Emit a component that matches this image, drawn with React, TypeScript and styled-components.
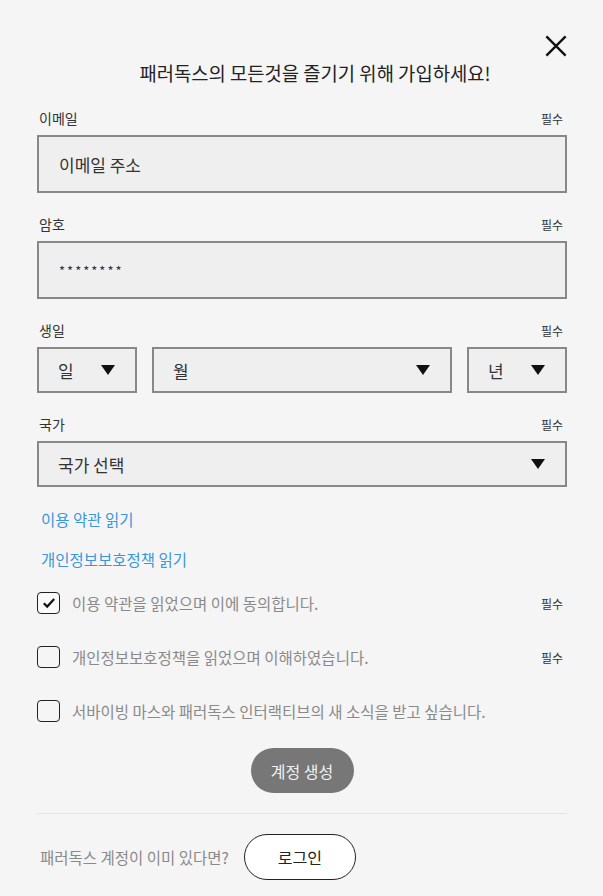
import { useState } from "react";
import styled, { createGlobalStyle } from "styled-components";

const FONT = `"Noto Sans CJK KR", "Noto Sans", sans-serif`;

const GlobalStyle = createGlobalStyle`
  * { box-sizing: border-box; }
  html, body {
    margin: 0;
    padding: 0;
    background: #f5f5f5;
    font-family: ${FONT};
  }
`;

export default function App() {
  const [terms, setTerms] = useState(true);
  const [privacy, setPrivacy] = useState(false);
  const [news, setNews] = useState(false);

  return (
    <Page>
      <GlobalStyle />
      <CloseRow>
        <CloseButton aria-label="닫기">
          <svg width="24" height="24" viewBox="0 0 24 24">
            <path d="M1.5 1.5 L22.5 22.5 M22.5 1.5 L1.5 22.5" stroke="#111" strokeWidth="2.6" fill="none" />
          </svg>
        </CloseButton>
      </CloseRow>
      <Title>패러독스의 모든것을 즐기기 위해 가입하세요!</Title>

      <Field>
        <LabelRow>
          <Label>이메일</Label>
          <Required>필수</Required>
        </LabelRow>
        <TextInput placeholder="이메일 주소" />
      </Field>

      <Field>
        <LabelRow>
          <Label>암호</Label>
          <Required>필수</Required>
        </LabelRow>
        <TextInput defaultValue="********" $mask />
      </Field>

      <Field>
        <LabelRow>
          <Label>생일</Label>
          <Required>필수</Required>
        </LabelRow>
        <DateRow>
          <Select>
            <span>일</span>
            <Arrow />
          </Select>
          <Select>
            <span>월</span>
            <Arrow />
          </Select>
          <Select>
            <span>년</span>
            <Arrow />
          </Select>
        </DateRow>
      </Field>

      <Field>
        <LabelRow>
          <Label>국가</Label>
          <Required>필수</Required>
        </LabelRow>
        <Select>
          <span>국가 선택</span>
          <Arrow />
        </Select>
      </Field>

      <Links>
        <LinkText href="#">이용 약관 읽기</LinkText>
        <LinkText href="#">개인정보보호정책 읽기</LinkText>
      </Links>

      <Checks>
        <CheckRow>
          <CheckBox $checked={terms} onClick={() => setTerms(!terms)}>
            {terms && (
              <svg width="14" height="12" viewBox="0 0 14 12">
                <path d="M1.8 6.2 L5.2 9.6 L12.2 2" stroke="#111" strokeWidth="2.2" fill="none" />
              </svg>
            )}
          </CheckBox>
          <CheckText>이용 약관을 읽었으며 이에 동의합니다.</CheckText>
          <Required>필수</Required>
        </CheckRow>
        <CheckRow>
          <CheckBox $checked={privacy} onClick={() => setPrivacy(!privacy)} />
          <CheckText>개인정보보호정책을 읽었으며 이해하였습니다.</CheckText>
          <Required>필수</Required>
        </CheckRow>
        <CheckRow>
          <CheckBox $checked={news} onClick={() => setNews(!news)} />
          <CheckText>서바이빙 마스와 패러독스 인터랙티브의 새 소식을 받고 싶습니다.</CheckText>
        </CheckRow>
      </Checks>

      <SubmitRow>
        <CreateButton>계정 생성</CreateButton>
      </SubmitRow>

      <Divider />

      <LoginRow>
        <LoginText>패러독스 계정이 이미 있다면?</LoginText>
        <LoginButton>로그인</LoginButton>
      </LoginRow>
    </Page>
  );
}

const Page = styled.div`
  width: 603px;
  padding: 35px 36px 16px 37px;
  display: flex;
  flex-direction: column;
`;

const CloseRow = styled.div`
  display: flex;
  justify-content: flex-end;
  height: 22px;
`;

const CloseButton = styled.button`
  width: 22px;
  height: 22px;
  padding: 0;
  margin: 0;
  border: none;
  background: none;
  cursor: pointer;
  display: flex;
  align-items: center;
  justify-content: center;

  svg {
    width: 22px;
    height: 22px;
  }
`;

const Title = styled.h1`
  margin: 3px 0 22px;
  padding-left: 26px;
  text-align: center;
  font-size: 18.8px;
  line-height: 26px;
  font-weight: 400;
  color: #222;
`;

const Field = styled.div`
  display: flex;
  flex-direction: column;
  & + & {
    margin-top: 21px;
  }
`;

const LabelRow = styled.div`
  display: flex;
  justify-content: space-between;
  align-items: center;
  height: 20px;
  margin-bottom: 7px;
  padding: 0 4px 0 2px;
`;

const Label = styled.span`
  font-size: 14px;
  color: #333;
`;

const Required = styled.span`
  font-size: 12px;
  color: #333;
`;

const TextInput = styled.input<{ $mask?: boolean }>`
  width: 100%;
  height: 58px;
  padding: 0 20px;
  border: 2px solid #888;
  background: #efefef;
  font-family: ${FONT};
  font-size: ${({ $mask }) => ($mask ? "13px" : "17px")};
  letter-spacing: ${({ $mask }) => ($mask ? "2px" : "0")};
  color: #333;
  outline: none;

  &::placeholder {
    color: #333;
    opacity: 1;
  }
`;

const DateRow = styled.div`
  display: grid;
  grid-template-columns: 100px 1fr 100px;
  gap: 15px;
`;

const Select = styled.div`
  display: flex;
  align-items: center;
  justify-content: space-between;
  height: 46px;
  padding: 0 20px 0 19px;
  border: 2px solid #888;
  background: #efefef;
  font-size: 17px;
  color: #333;
  cursor: pointer;
`;

const Arrow = styled.span`
  width: 0;
  height: 0;
  border-left: 7px solid transparent;
  border-right: 7px solid transparent;
  border-top: 10px solid #111;
`;

const Links = styled.div`
  display: flex;
  flex-direction: column;
  gap: 16px;
  margin-top: 20px;
  padding-left: 4px;
`;

const LinkText = styled.a`
  font-size: 15.5px;
  line-height: 24px;
  color: #3a97dc;
  text-decoration: none;
`;

const Checks = styled.div`
  display: flex;
  flex-direction: column;
  gap: 32px;
  margin-top: 21px;
  padding-right: 4px;
`;

const CheckRow = styled.label`
  display: flex;
  align-items: center;
  height: 22px;
  gap: 12px;
`;

const CheckBox = styled.span<{ $checked: boolean }>`
  flex: none;
  width: 23px;
  height: 22px;
  border: 1.5px solid #222;
  border-radius: 4px;
  display: flex;
  align-items: center;
  justify-content: center;
  background: ${({ $checked }) => ($checked ? "#fafafa" : "transparent")};
  cursor: pointer;
`;

const CheckText = styled.span`
  flex: 1;
  font-size: 15.5px;
  color: #8a8a8a;
`;

const SubmitRow = styled.div`
  display: flex;
  justify-content: center;
  margin-top: 26px;
`;

const CreateButton = styled.button`
  width: 103px;
  height: 45px;
  border: none;
  border-radius: 23px;
  background: #777;
  color: #f2f2f2;
  font-family: ${FONT};
  font-size: 16px;
  cursor: pointer;
`;

const Divider = styled.hr`
  margin: 20px 0 0;
  border: none;
  border-top: 1px solid #e4e4e4;
`;

const LoginRow = styled.div`
  display: flex;
  align-items: center;
  gap: 15px;
  margin-top: 20px;
  padding-left: 3px;
`;

const LoginText = styled.span`
  font-size: 15.5px;
  color: #8a8a8a;
`;

const LoginButton = styled.button`
  width: 112px;
  height: 46px;
  border: 1px solid #222;
  border-radius: 23px;
  background: #fff;
  color: #222;
  font-family: ${FONT};
  font-size: 16px;
  cursor: pointer;
`;
